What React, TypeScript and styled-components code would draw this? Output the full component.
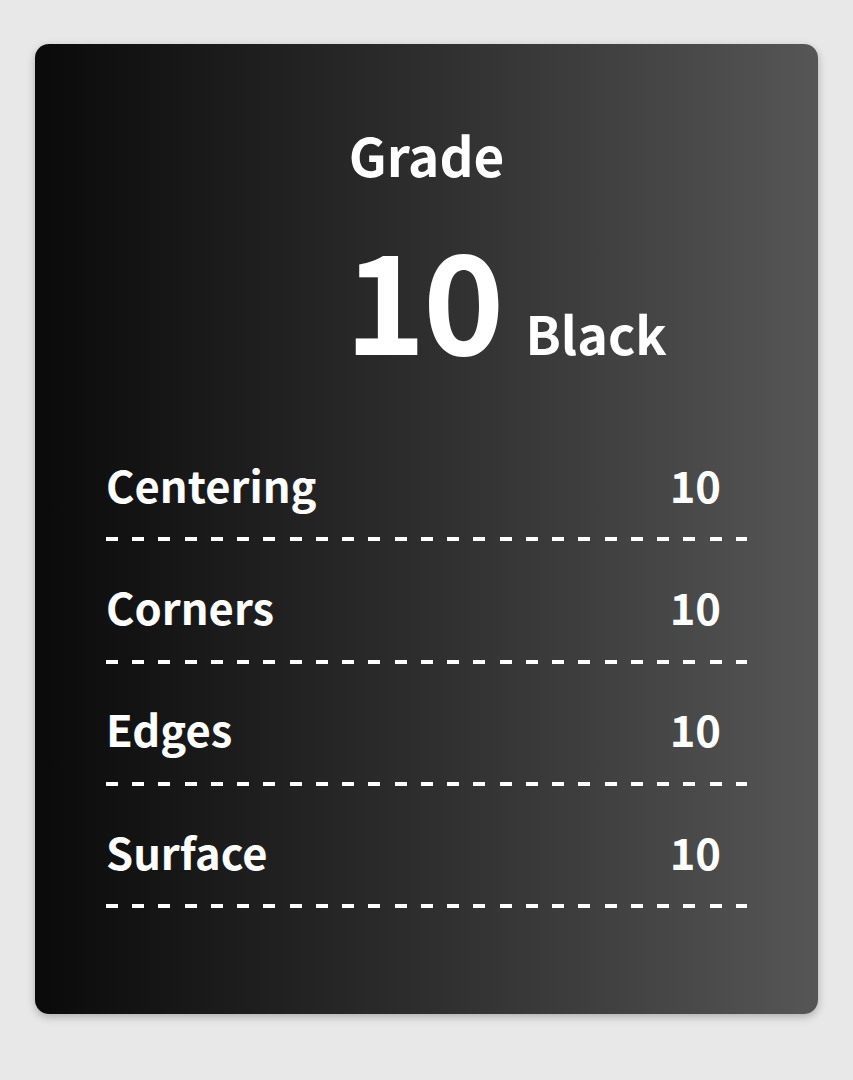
import styled, { createGlobalStyle } from "styled-components";

const GlobalStyle = createGlobalStyle`
  html, body {
    margin: 0;
    padding: 0;
    background: #e8e8e8;
  }
  body {
    font-family: "Noto Sans CJK SC", "Noto Sans", sans-serif;
  }
`;

const Page = styled.div`
  padding: 44px 35px 66px 35px;
`;

const Card = styled.div`
  width: 783px;
  height: 970px;
  box-sizing: border-box;
  border-radius: 14px;
  background: linear-gradient(90deg, #0a0a0b 0%, #2e2e2e 50%, #565656 100%);
  box-shadow: 0 3px 8px rgba(0, 0, 0, 0.25);
  color: #fff;
  padding: 84px 71px 0 71px;
`;

const Header = styled.div`
  display: flex;
  flex-direction: column;
  align-items: center;
`;

const Title = styled.div`
  font-size: 53px;
  font-weight: 700;
  line-height: 1;
`;

const ScoreLine = styled.div`
  width: 100%;
  display: grid;
  grid-template-columns: 1fr auto 1fr;
  align-items: baseline;
  margin-top: 45px;
`;

const Score = styled.div`
  grid-column: 2;
  font-size: 138px;
  font-weight: 700;
  line-height: 1;
  letter-spacing: -3px;
  padding-right: 7px;
`;

const Label = styled.div`
  grid-column: 3;
  font-size: 52px;
  font-weight: 700;
  line-height: 1;
  margin-left: 17px;
`;

const List = styled.div`
  margin-top: 55px;
  display: flex;
  flex-direction: column;
`;

const Row = styled.div`
  display: flex;
  justify-content: space-between;
  align-items: center;
  height: 122.3px;
  box-sizing: border-box;
  padding-top: 8px;
  position: relative;
  font-size: 43.5px;
  font-weight: 700;
  &::after {
    content: "";
    position: absolute;
    left: 0;
    right: 0;
    bottom: 0;
    height: 4px;
    background: repeating-linear-gradient(
      90deg,
      #fff 0,
      #fff 12px,
      transparent 12px,
      transparent 26.25px
    );
  }
`;

const Value = styled.span`
  margin-right: 26px;
`;

const rows = ["Centering", "Corners", "Edges", "Surface"];

export default function App() {
  return (
    <>
      <GlobalStyle />
      <Page>
        <Card>
          <Header>
            <Title>Grade</Title>
            <ScoreLine>
              <Score>10</Score>
              <Label>Black</Label>
            </ScoreLine>
          </Header>
          <List>
            {rows.map((name) => (
              <Row key={name}>
                <span>{name}</span>
                <Value>10</Value>
              </Row>
            ))}
          </List>
        </Card>
      </Page>
    </>
  );
}
